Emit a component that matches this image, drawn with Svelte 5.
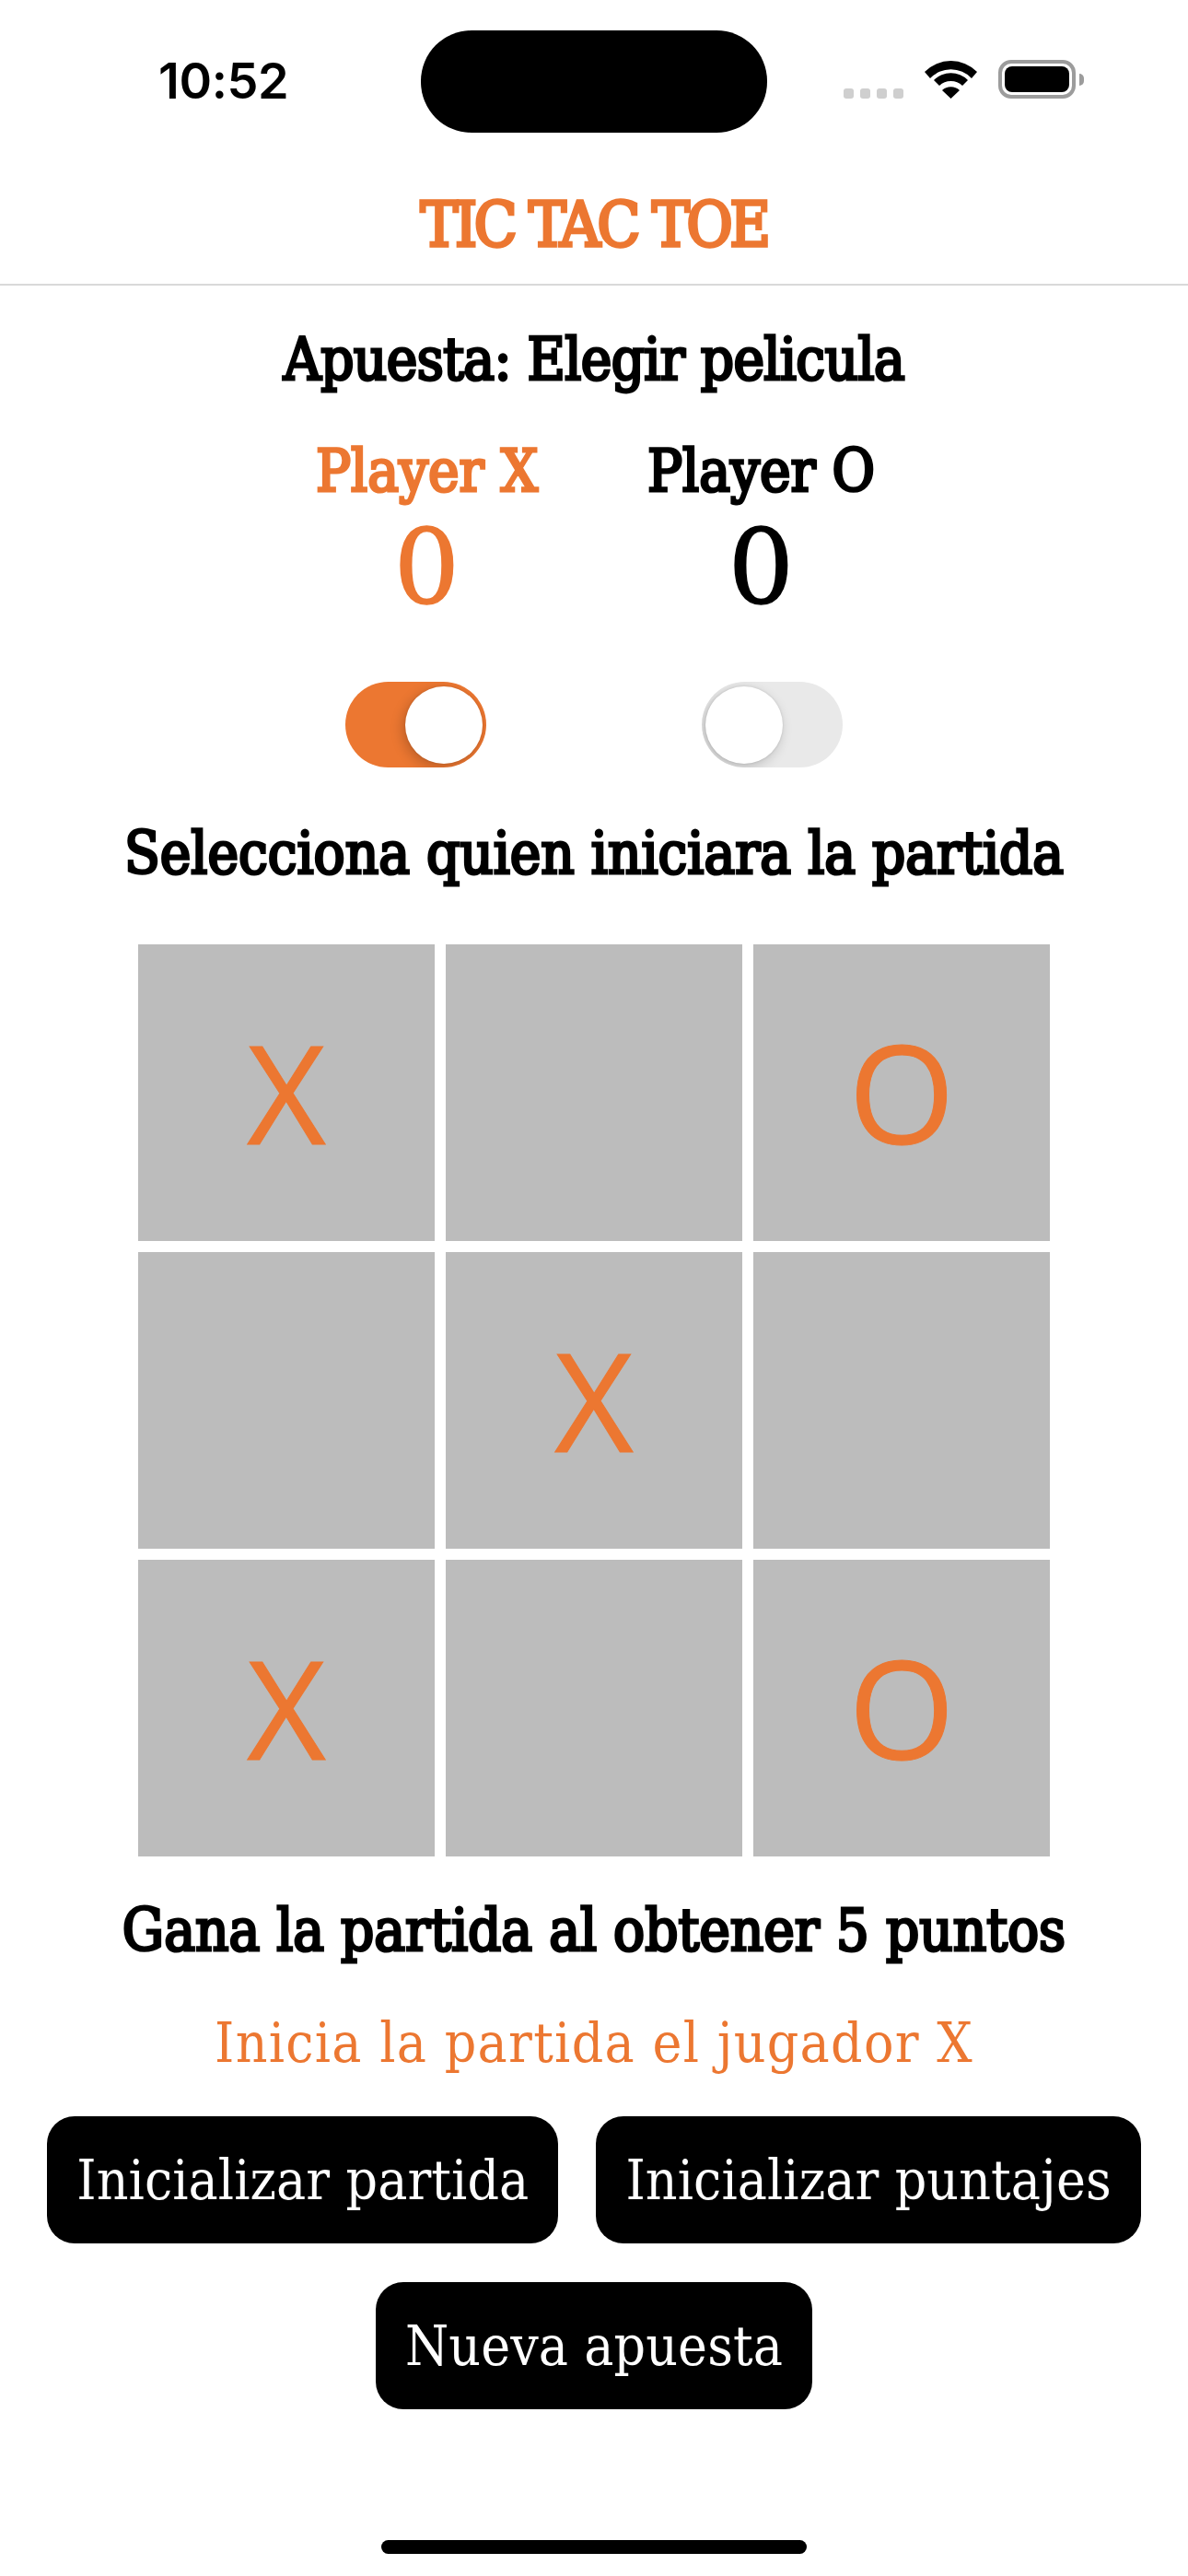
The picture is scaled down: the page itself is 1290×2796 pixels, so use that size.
<script>
  const cells = ['X', '', 'O', '', 'X', '', 'X', '', 'O'];
</script>

<div class="page">
  <div class="status">
    <span class="time">10:52</span>
    <div class="island"></div>
    <div class="icons">
      <div class="dots"><i></i><i></i><i></i><i></i></div>
      <svg class="wifi" width="57" height="42" viewBox="0 0 57 42"><path d="M0 13 A40 40 0 0 1 57 13 L51 20 A31 31 0 0 0 6 20 Z M10 22 A26 26 0 0 1 47 22 L41 28 A18 18 0 0 0 16 28 Z M28.5 42 L19 33 A14 14 0 0 1 38 33 Z" fill="#000"/></svg>
      <div class="battery"><b></b></div>
      <div class="nub"></div>
    </div>
  </div>
  <h1 class="title">TIC TAC TOE</h1>

  <p class="bet strong">Apuesta: Elegir pelicula</p>

  <div class="players">
    <div class="player on"><div class="pname strong">Player X</div><div class="score">0</div></div>
    <div class="player"><div class="pname strong">Player O</div><div class="score">0</div></div>
  </div>

  <div class="toggles">
    <div class="toggle on"><span></span></div>
    <div class="toggle"><span></span></div>
  </div>

  <p class="select strong">Selecciona quien iniciara la partida</p>

  <div class="board">
    {#each cells as c}
      <div class="cell">{c}</div>
    {/each}
  </div>

  <p class="win strong">Gana la partida al obtener 5 puntos</p>
  <p class="turn">Inicia la partida el jugador X</p>

  <div class="actions">
    <button>Inicializar partida</button>
    <button>Inicializar puntajes</button>
    <button>Nueva apuesta</button>
  </div>

  <div class="home"></div>
</div>

<style>
  :global(body) { margin: 0; background: #fff; }
  .page {
    width: 1290px; height: 2796px; display: flex; flex-direction: column; align-items: center;
    font-family: "DejaVu Serif Condensed", "DejaVu Serif", serif; color: #000; overflow: hidden;
  }
  .status {
    width: 100%; box-sizing: border-box; height: 144px; padding: 33px 113px 0 172px;
    display: flex; align-items: flex-start;
  }
  .time { font-family: Inter, sans-serif; font-weight: 600; font-size: 54px; line-height: 50px; margin-top: 30px; width: 285px; letter-spacing: -0.4px; }
  .island { width: 376px; height: 111px; background: #000; border-radius: 55px; }
  .icons { display: flex; align-items: flex-end; margin-left: auto; margin-top: 32px; height: 42px; }
  .dots { display: flex; gap: 7px; margin-right: 23px; }
  .dots i { width: 11px; height: 11px; background: #cfcfcf; border-radius: 3px; }
  .wifi { margin-right: 23px; }
  .battery { width: 84px; height: 42px; box-sizing: border-box; border: 4px solid #9c9c9c; border-radius: 14px; padding: 3px; }
  .battery b { display: block; height: 100%; background: #000; border-radius: 8px; }
  .nub { width: 5px; height: 13px; background: #9c9c9c; border-radius: 0 6px 6px 0; margin: 0 0 14px 4px; }
  .title {
    width: 100%; box-sizing: border-box; margin: 0; height: 166px; padding-top: 65px;
    border-bottom: 2px solid #d9d9d9; text-align: center; color: #ec7731;
    font-size: 68px; line-height: 70px; font-weight: 400; letter-spacing: -3.4px; -webkit-text-stroke: 3.5px #ec7731;
  }
  p { margin: 0; text-align: center; white-space: nowrap; }
  .strong { font-weight: 400; font-size: 63px; line-height: 70px; -webkit-text-stroke: 3px currentColor; }
  .bet { margin-top: 46px; letter-spacing: -.6px; }
  .players { display: flex; gap: 121px; margin-top: 51px; }
  .player { width: 242px; display: flex; flex-direction: column; align-items: center; white-space: nowrap; }
  .player.on { color: #ec7731; }
  .score { font-family: "DejaVu Serif", serif; font-size: 112px; line-height: 100px; margin-top: 18px; -webkit-text-stroke: 1.5px currentColor; }
  .toggles { display: flex; gap: 234px; margin-top: 75px; }
  .toggle { width: 153px; height: 93px; border-radius: 47px; background: #e9e9e9; position: relative; overflow: hidden; }
  .toggle.on { background: #ec7731; }
  .toggle span { position: absolute; top: 5px; left: 4px; width: 84px; height: 84px; border-radius: 50%; background: #fff; box-shadow: -3px 4px 14px rgba(0,0,0,.2), 0 0 3px rgba(0,0,0,.12); }
  .toggle.on span { left: 65px; }
  .select { margin-top: 59px; }
  .board { display: grid; grid-template-columns: repeat(3, 322px); grid-auto-rows: 322px; gap: 12px; margin-top: 63px; }
  .cell {
    background: #bcbcbc; color: #ec7731; display: flex; align-items: center; justify-content: center; box-sizing: border-box; padding-bottom: 2px;
    font-family: "Open Sans", sans-serif; font-size: 148px; line-height: 1; -webkit-text-stroke: 1px #ec7731;
  }
  .win { margin-top: 46px; }
  .turn { color: #ec7731; font-size: 60px; line-height: 70px; margin-top: 51px; letter-spacing: 1.3px; }
  .actions { display: flex; flex-wrap: wrap; justify-content: center; gap: 42px 41px; margin-top: 45px; width: 1230px; }
  button {
    background: #000; color: #fff; border: 0; border-radius: 30px; height: 138px; padding: 0 32px;
    font: inherit; font-size: 60px; white-space: nowrap; letter-spacing: .1px;
  }
  .home { width: 462px; height: 15px; border-radius: 8px; background: #000; margin-top: 142px; }
</style>
